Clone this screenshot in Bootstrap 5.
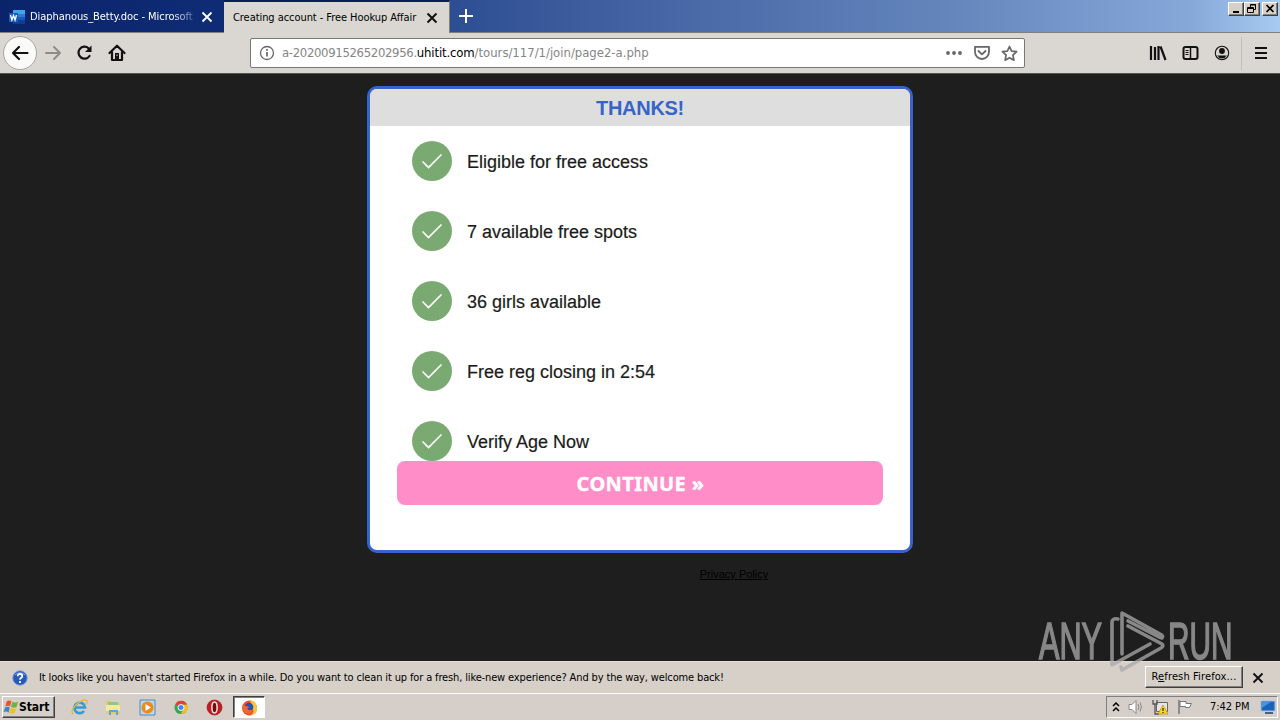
<!DOCTYPE html>
<html lang="en">
<head>
  <meta charset="UTF-8" />
  <meta name="viewport" content="width=device-width, initial-scale=1.0" />
  <title>Creating account - Free Hookup Affair</title>
  <link href="https://cdn.jsdelivr.net/npm/bootstrap@5.3.3/dist/css/bootstrap.min.css" rel="stylesheet" />
  <style>
    body { width: 1280px; height: 720px; overflow: hidden; background: #1e1e1e; color: #000; font-family: "DejaVu Sans Condensed", "DejaVu Sans", sans-serif; font-size: 11px; line-height: 14px; }
    svg { display: block; flex: none; }
    .ui-text { white-space: nowrap; letter-spacing: -0.06px; }

    /* Tabs */
    .tab-strip { height: 33px; background: linear-gradient(90deg, #0a246a 0%, #0f2c76 18%, #2f4f94 36%, #4a6aa8 55%, #6587bd 75%, #86a8d9 93%, #a6caf0 100%); border-bottom: 1px solid #808080; }
    .tab-word { width: 224px; padding: 1px 11px 0 9px; color: #fff; }
    .tab-word .tab-title { margin-left: 5px; -webkit-mask-image: linear-gradient(90deg, #000 142px, rgba(0, 0, 0, .25) 164px); }
    .tab-active { width: 226px; height: 33px; margin-bottom: -1px; padding: 0 11px 0 9px; background: #dad7d2; border-top: 2px solid #0a1f5c; border-right: 1px solid #808080; }
    .win-btns { padding: 2px 2px 0 0; }
    .win-btn { width: 16px; height: 14px; background: #d6d0c8; border: 1px solid; border-color: #fff #404040 #404040 #fff; box-shadow: inset -1px -1px #808080; }
    .win-close { margin-left: 2px; }

    /* Toolbar */
    .tool-bar { height: 40px; padding: 0 13px 0 3px; background: #dad6d1; }
    .nav-icons { gap: 15px; margin-left: 7px; }
    .back-btn { width: 34px; height: 34px; border: 1px solid #a9a6a1; border-radius: 50%; background: #fafaf9; }
    .url-box { width: 775px; height: 30px; margin-left: 124px; padding: 0 6px 0 8px; background: #fff; border: 1px solid #777; border-radius: 2px; color: #858585; font-size: 13px; }
    .url-box .ui-text { margin-left: 7px; letter-spacing: -0.34px; }
    .url-box .url-host { color: #000; letter-spacing: -0.14px; }
    .url-box .url-path { letter-spacing: -0.02px; }
    .url-icons { gap: 10px; }
    .side-icons { gap: 15px; margin-right: 11px; }
    .tool-sep { width: 1px; height: 33px; margin-right: 13px; background: #c2beb9; }

    /* Page */
    .page-area { height: 588px; background: #1e1e1e; border-top: 1px solid #555; font-family: "Liberation Sans", Arial, sans-serif; }
    .thanks-box { width: 546px; height: 467px; margin-top: 12px; background: #fff; border: 3px solid #3764c8; border-radius: 10px; overflow: hidden; }
    .thanks-head { height: 37px; padding-top: 1px; background: #dedede; color: #3764c8; font-size: 20px; font-weight: bold; line-height: 36px; letter-spacing: -0.3px; }
    .check-list { padding: 15px 0 0 42px; gap: 30px; font-size: 18px; line-height: 20px; color: #1b1b1b; -webkit-text-stroke: .2px #1b1b1b; }
    .check-label { margin: 2px 0 0 15px; }
    .check-dot { width: 40px; height: 40px; border-radius: 50%; background: #7aaa72; }
    .continue-btn { height: 44px; margin: 0 27px; padding-left: 1px; background: #ff8dc7; border-radius: 8px; color: #fff; font: bold 20px/45px "Noto Sans", "Open Sans", sans-serif; letter-spacing: .4px; -webkit-text-stroke: .4px #fff; }
    .privacy-link { margin: 14px 0 0 188px; color: #000; font-size: 11px; line-height: 14px; }
    .watermark { left: 1030px; top: 602px; z-index: 2; }

    /* Notification bar and taskbar */
    .notice-bar { height: 32px; padding: 0 16px 0 12px; background: #d6d0c8; border-top: 1px solid #e2ded9; }
    .notice-bar .notice-text { margin-left: 11px; letter-spacing: -0.14px; }
    .refresh-btn { width: 98px; height: 22px; margin: 0 9px 2px 0; background: #d6d0c8; border: 1px solid; border-color: #fff #404040 #404040 #fff; box-shadow: inset -1px -1px #808080; line-height: 20px; }
    .refresh-btn.ui-text { letter-spacing: .13px; }
    .task-bar { height: 27px; padding: 0 2px; background: #d6cfc9; border-top: 1px solid #fff; }
    .start-btn { width: 53px; height: 22px; border: 1px solid; border-color: #fff #404040 #404040 #fff; box-shadow: inset -1px -1px #808080; font-weight: bold; font-size: 12px; }
    .quick-launch { gap: 17px; margin-left: 16px; }
    .task-active { width: 32px; height: 22px; margin-left: 10px; background: #fff; border: 1px solid; border-color: #404040 #fff #fff #404040; box-shadow: inset 1px 1px #808080; }
    .tray { width: 172px; height: 22px; padding: 0 1px 0 5px; border: 1px solid; border-color: #808080 #fff #fff #808080; }
    .tray-icons { gap: 8px; }
    .clock-text { margin-left: 17px; }
  </style>
</head>
<body>
  <header>
    <div class="tab-strip d-flex">
      <div class="tab-word d-flex align-items-center">
        <svg width="16" height="16" viewBox="0 0 16 16">
          <path fill="#41a5ee" d="M4 1h12v4H4z"/><path fill="#2b7cd3" d="M4 5h12v3H4z"/><path fill="#185abd" d="M4 8h12v3H4z"/><path fill="#103f91" d="M4 11h12v4H4z"/>
          <path fill="#185abd" d="M0 4h9v9H0z"/><path d="M1.500 6l1.400 5L4.500 6.500 6.100 11l1.400-5" fill="none" stroke="#fff" stroke-width="1.300"/>
        </svg>
        <span class="tab-title ui-text">Diaphanous_Betty.doc - Microsoft</span>
        <svg class="ms-auto" width="12" height="12" viewBox="0 0 12 12"><path d="M1.500 1.500l9 9M10.500 1.500l-9 9" stroke="#fff" stroke-width="1.800"/></svg>
      </div>
      <div class="tab-active d-flex align-items-center">
        <span class="tab-title ui-text">Creating account - Free Hookup Affair</span>
        <svg class="ms-auto" width="12" height="12" viewBox="0 0 12 12"><path d="M1.500 1.500l9 9M10.500 1.500l-9 9" stroke="#111" stroke-width="2"/></svg>
      </div>
      <svg class="mt-2 ms-2" width="16" height="16" viewBox="0 0 16 16"><path d="M8 1v14M1 8h14" stroke="#fff" stroke-width="2"/></svg>
      <div class="win-btns d-flex ms-auto">
        <div class="win-btn"><svg width="14" height="12"><path d="M4 9h6" stroke="#000" stroke-width="2"/></svg></div>
        <div class="win-btn"><svg width="14" height="12" fill="none" stroke="#000"><path d="M5.500 5V1.500h5v5H8.500M5 2h6M2.500 4.500h6v5h-6zM2 5.500h7"/></svg></div>
        <div class="win-btn win-close"><svg width="14" height="12"><path d="M3.500 2l7 7M10.500 2l-7 7" stroke="#000" stroke-width="1.700"/></svg></div>
      </div>
    </div>

    <div class="tool-bar d-flex align-items-center">
      <div class="back-btn d-flex align-items-center justify-content-center">
        <svg width="18" height="16" viewBox="0 0 18 16" fill="none" stroke="#111" stroke-width="2.200" stroke-linecap="round" stroke-linejoin="round"><path d="M16.500 8H2M8 2L2 8l6 6"/></svg>
      </div>
      <div class="nav-icons d-flex align-items-center">
        <svg width="17" height="16" viewBox="0 0 17 16" fill="none" stroke="#8d8b88" stroke-width="1.900" stroke-linecap="round" stroke-linejoin="round"><path d="M2 8h14M10 2l6 6-6 6"/></svg>
        <svg width="17" height="16" viewBox="0 0 17 16"><path d="M12.500 3.200A6 6 0 1 0 13.500 11" fill="none" stroke="#111" stroke-width="2.200" stroke-linecap="round"/><path d="M15.500 .500V7H9z" fill="#111"/></svg>
        <svg width="18" height="18" viewBox="0 0 18 18"><path d="M1.500 9L9 1.700 16.500 9M4 8v8h10V8" fill="none" stroke="#111" stroke-width="2.200" stroke-linejoin="round" stroke-linecap="round"/><path d="M7 9h4v6H7z" fill="#111"/><path d="M8.500 10.500h1v1.500h-1z" fill="#ddd"/></svg>
      </div>
      <div class="url-box d-flex align-items-center">
        <svg width="16" height="16" viewBox="0 0 16 16"><circle cx="8" cy="8" r="6.500" fill="none" stroke="#666" stroke-width="1.300"/><path d="M8 7v4.500M8 4v1.800" stroke="#666" stroke-width="1.700"/></svg>
        <span class="ui-text">a-20200915265202956.<span class="url-host">uhitit.com</span><span class="url-path">/tours/117/1/join/page2-a.php</span></span>
        <div class="url-icons d-flex align-items-center ms-auto">
          <svg width="18" height="16" fill="#666"><circle cx="3" cy="8" r="1.900"/><circle cx="9" cy="8" r="1.900"/><circle cx="15" cy="8" r="1.900"/></svg>
          <svg width="18" height="16" viewBox="0 0 18 16" fill="none" stroke="#666" stroke-width="1.800" stroke-linecap="round" stroke-linejoin="round"><path d="M2 1.800h14V7a7 7 0 0 1-14 0zM5.500 6L9 9.400 12.500 6"/></svg>
          <svg width="17" height="17" viewBox="0 0 17 17" fill="none" stroke="#666" stroke-width="1.700" stroke-linejoin="round"><path d="M8.500 1.500l2.100 4.600 5 .6-3.700 3.500 1 5-4.400-2.500-4.400 2.500 1-5L1.400 6.700l5-.6z"/></svg>
        </div>
      </div>
      <div class="side-icons d-flex align-items-center ms-auto">
        <svg width="18" height="16" viewBox="0 0 18 16" stroke="#111" stroke-width="2.200"><path d="M2 1v14M6 2v13M9.500 1v14M11.500 1.500l5 13.500"/></svg>
        <svg width="17" height="16" viewBox="0 0 17 16"><rect x="1.500" y="2" width="14" height="12" rx="2" fill="none" stroke="#111" stroke-width="2"/><path d="M8.500 2v12" stroke="#111" stroke-width="1.500"/><path d="M3.500 5.500h3M3.500 7.500h3M3.500 9.500h3" stroke="#111"/></svg>
        <svg width="16" height="16" viewBox="0 0 16 16"><circle cx="8" cy="8" r="6.700" fill="none" stroke="#111" stroke-width="1.100"/><circle cx="8" cy="6" r="2.900" fill="#111"/><path d="M3.200 10.500h9.600Q11 13.500 8 13.500t-4.800-3z" fill="#111"/></svg>
      </div>
      <div class="tool-sep"></div>
      <svg width="12" height="14"><path d="M0 2h12M0 7h12M0 12h12" stroke="#111" stroke-width="2"/></svg>
    </div>
  </header>

  <main class="page-area d-flex flex-column align-items-center">
    <section class="thanks-box">
      <div class="thanks-head text-center">THANKS!</div>
      <div class="check-list d-flex flex-column" id="checkList"></div>
      <div class="continue-btn text-center">CONTINUE »</div>
    </section>
    <a href="#" class="privacy-link">Privacy Policy</a>
  </main>

  <footer>
    <div class="notice-bar d-flex align-items-center">
      <svg width="16" height="16" viewBox="0 0 16 16"><circle cx="8" cy="8" r="7.300" fill="#2858b8" stroke="#8ca7dc"/><path d="M3 5a6 5 0 0 1 10 0" fill="none" stroke="#7ea4e8"/><path d="M5.700 6.200Q5.800 4 8 4t2.300 2q0 1.200-1.200 1.900T8 9.700M8 11v2" fill="none" stroke="#fff" stroke-width="1.800"/></svg>
      <span class="ui-text notice-text">It looks like you haven't started Firefox in a while. Do you want to clean it up for a fresh, like-new experience? And by the way, welcome back!</span>
      <div class="refresh-btn ui-text text-center ms-auto">R<u>e</u>fresh Firefox...</div>
      <svg width="12" height="12" viewBox="0 0 12 12"><path d="M1.500 1.500l9 9M10.500 1.500l-9 9" stroke="#111" stroke-width="1.900"/></svg>
    </div>
    <div class="task-bar d-flex align-items-center">
      <div class="start-btn d-flex align-items-center">
        <svg width="16" height="16" viewBox="0 0 17 16"><path fill="#e5562b" d="M4 2q3-2 5 0L7.500 7.500q-2-1.500-5 0z"/><path fill="#6eb33f" d="M10 2.500q3 1.500 6 0L14.500 8q-3 1.500-6 0z"/><path fill="#3e82d0" d="M2.200 8.500q3-1.500 5 0L6 14q-2.500-2-5.500-.5z"/><path fill="#f4bd24" d="M8.200 9q3 1.500 6 0L12.500 14q-3 1.500-5.500.5z"/></svg>
        <span class="ui-text">Start</span>
      </div>
      <div class="quick-launch d-flex align-items-center">
        <svg width="17" height="17" viewBox="0 0 17 17" fill="none"><path d="M13 12a5.300 5.300 0 1 1 1-3.500H4" stroke="#2f9de0" stroke-width="2.700"/><path d="M2 15Q-1 11 6 5t10-3q1 2-2 4" stroke="#e8b82e" stroke-width="1.300"/></svg>
        <svg width="17" height="17" viewBox="0 0 17 17"><path d="M1 2h5l1 2h8v11H1z" fill="#e9c867"/><path d="M3 3h10v5H3z" fill="#8dc88a"/><path d="M1 6h14v6H1z" fill="#f8e7a0"/><path d="M4 16v-5h9v5h-2v-3H6v3z" fill="#54a9dd"/></svg>
        <svg width="17" height="17" viewBox="0 0 17 17"><path d="M1 1h15v15H1z" fill="#b9d7ed" stroke="#4a8cc4"/><circle cx="8.500" cy="8.500" r="6" fill="#f08a16"/><path d="M6.500 5l5.500 3.500L6.500 12z" fill="#fff"/></svg>
        <svg width="16" height="15" viewBox="0 0 16 16"><circle cx="8" cy="8" r="7" fill="#36a853"/><path d="M8 8L2 4.500A7 7 0 0 1 14.500 5H8z" fill="#e34134"/><path d="M8 5h6.500A7 7 0 0 1 8 15l3-6z" fill="#fbc116"/><circle cx="8" cy="8" r="3.200" fill="#4285f4" stroke="#fff"/></svg>
        <svg width="17" height="17" viewBox="0 0 17 17"><circle cx="8.500" cy="8.500" r="7.500" fill="#c31c20" stroke="#8f1215" stroke-width=".6"/><ellipse cx="8.500" cy="8.500" rx="2.600" ry="5.500" fill="#6d1010" stroke="#f4e4e2" stroke-width="1.500"/></svg>
      </div>
      <div class="task-active d-flex align-items-center justify-content-center">
        <svg width="17" height="17" viewBox="0 0 17 17"><circle cx="8.500" cy="9" r="7.500" fill="#f34a32"/><path d="M8.500 1q7 1 7.500 8t-7.500 7.500q5-2 3.500-7T8.500 1z" fill="#ffc52e"/><circle cx="8" cy="8" r="4.300" fill="#2552b5"/><path d="M1.500 5.500Q3 7 7 7.500q2 1-1 2 2 3 6 1-1 4-5 4.500-6-1-5.500-9.500z" fill="#f8642a"/></svg>
      </div>
      <div class="tray d-flex align-items-center ms-auto">
        <div class="tray-icons d-flex align-items-center">
          <svg width="8" height="10" fill="none" stroke="#000" stroke-width="1.500"><path d="M1 4l3-3 3 3M1 9l3-3 3 3"/></svg>
          <svg width="16" height="16" viewBox="0 0 16 16" fill="none" stroke="#888"><path d="M1 5.500h3l4-4v13l-4-4H1z" fill="#fff"/><path d="M10 5q2 3 0 6M12 3.500q3 4.500 0 9"/></svg>
          <svg width="17" height="16" viewBox="0 0 17 16"><path d="M4.500 3.500h11v9h-11z" fill="#e5e5e5" stroke="#666"/><path d="M1 1v4h4V1M3 5v10h4" fill="none" stroke="#555" stroke-width="1.300"/><path d="M11 6l5 9H6z" fill="#ffd91d" stroke="#b39000" stroke-width=".7"/><path d="M11 9v3M11 13v1" stroke="#000"/></svg>
          <svg width="16" height="16" viewBox="0 0 16 16" fill="#fff" stroke="#777"><path d="M2 1v14" stroke-width="1.500"/><path d="M3 2.500h6v2h5.500l-2 4H8.500v-1H3z"/></svg>
        </div>
        <span class="ui-text clock-text">7:42 PM</span>
        <svg class="ms-auto" width="16" height="14" viewBox="0 0 16 14"><path d="M1 1h14v10H1z" fill="#1963bd" stroke="#a8c3de"/><path d="M1.500 1.500h10L2 8z" fill="#4b93dc"/><path d="M5 12h8v2H5z" fill="#48617e"/></svg>
      </div>
    </div>
  </footer>

  <!-- Watermark over the page and the notification bar -->
  <svg class="watermark position-absolute" width="240" height="80" fill="#aaa" opacity=".75" font-family="Liberation Sans, Arial" font-size="52">
    <text transform="translate(9 57) scale(.59 1)" stroke="#aaa" stroke-width="1.700">ANY</text>
    <text transform="translate(138 57) scale(.572 1)" stroke="#aaa" stroke-width="1.700">RUN</text>
    <g fill="none" stroke="#aaa" stroke-width="3.600" stroke-linejoin="round" stroke-linecap="round">
      <path d="M92 52V11l38 21q4 2 2 4l-3-1-31-16"/>
      <path d="M88 17q-6-1-6 3v43l38-21"/>
      <path d="M98 24l34 18q2 2-1 4L92 68l-1-3"/>
    </g>
  </svg>

  <script>
    const items = [
      "Eligible for free access",
      "7 available free spots",
      "36 girls available",
      "Free reg closing in 2:54",
      "Verify Age Now"
    ];

    document.getElementById("checkList").innerHTML = items.map(text => `
      <div class="d-flex align-items-center">
        <div class="check-dot"><svg width="40" height="40" fill="none" stroke="#fff" stroke-width="1.700"><path d="M10.500 20.500l6 6L29.500 13.500"/></svg></div>
        <span class="check-label">${text}</span>
      </div>`).join("");
  </script>
</body>
</html>
